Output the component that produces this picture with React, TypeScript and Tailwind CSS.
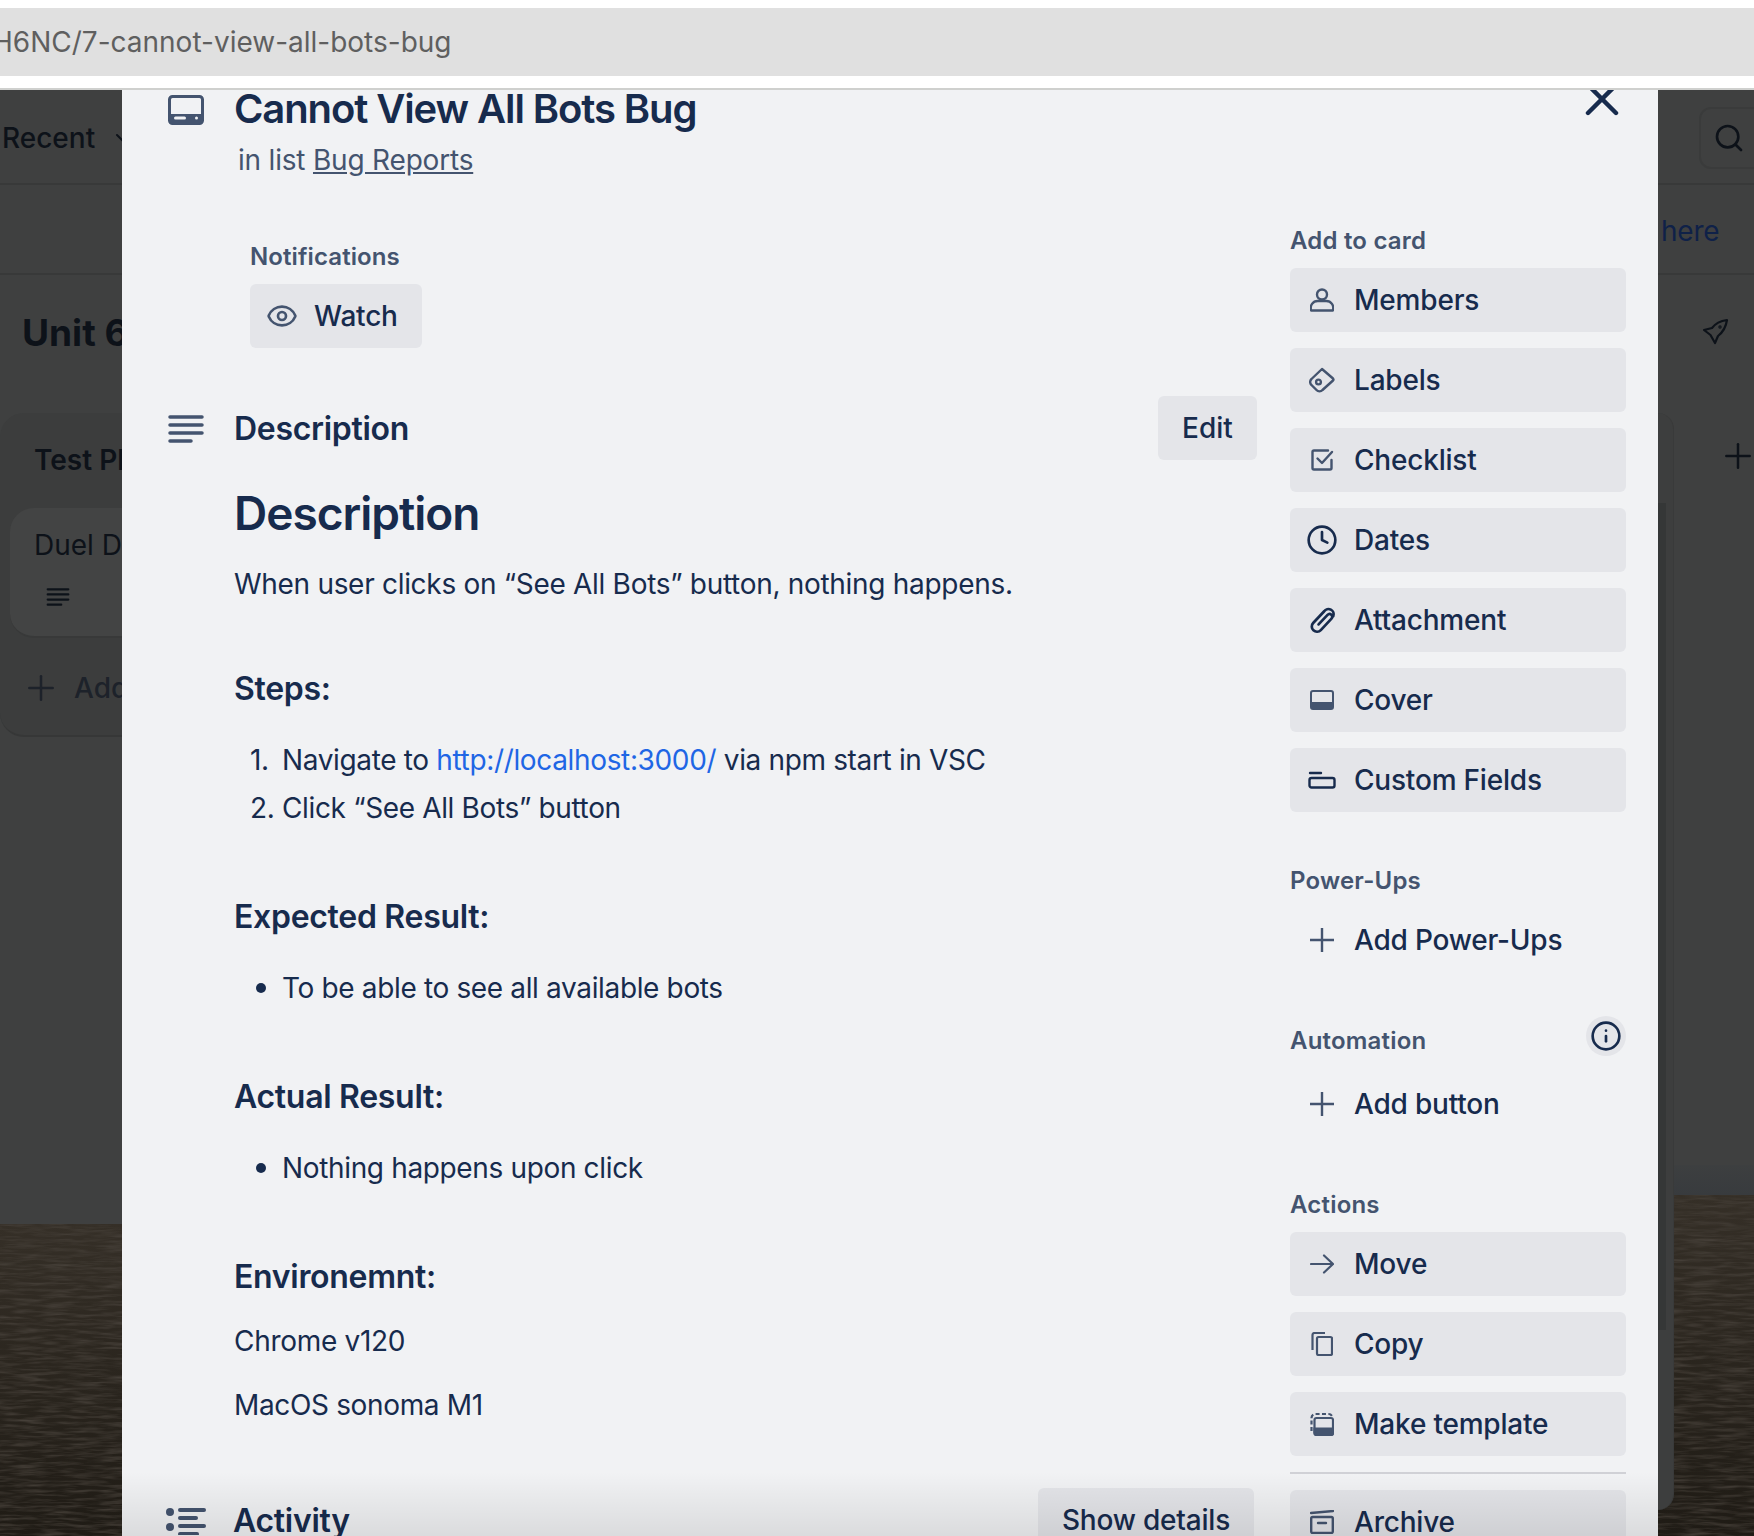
import { ChevronDown, Clock, Eye, Info, Plus, Search, X } from "lucide-react";
import type { ReactNode } from "react";

const font = "font-['Inter',sans-serif]";

function CardIcon({ className }: { className: string }) {
  return (
    <svg viewBox="0 0 36 30" className={className} fill="none">
      <rect x="1.5" y="1.5" width="33" height="27" rx="3" stroke="currentColor" strokeWidth="3" />
      <path d="M2 19h32v7a3 3 0 0 1-3 3H5a3 3 0 0 1-3-3z" fill="currentColor" />
      <rect x="6" y="21.5" width="12" height="3" rx="1.5" fill="#f1f2f4" />
      <rect x="27" y="21.5" width="3" height="3" rx="1.5" fill="#f1f2f4" />
    </svg>
  );
}

function LinesIcon({ className }: { className: string }) {
  return (
    <svg viewBox="0 0 36 28" className={className} fill="none" stroke="currentColor" strokeWidth="3.5" strokeLinecap="round">
      <path d="M2 2h32M2 10h32M2 18h32M2 26h21" />
    </svg>
  );
}

function ActivityIcon({ className }: { className: string }) {
  return (
    <svg viewBox="0 0 40 28" className={className} fill="currentColor">
      <circle cx="4" cy="5" r="4" />
      <circle cx="4" cy="20" r="4" />
      <rect x="12" y="1" width="28" height="4" rx="2" />
      <rect x="12" y="9" width="20" height="4" rx="2" />
      <rect x="12" y="17" width="28" height="4" rx="2" />
      <rect x="12" y="25" width="21" height="4" rx="2" />
    </svg>
  );
}

function MemberIcon() {
  return (
    <svg viewBox="0 0 24 24" className="w-6 h-6" fill="none" stroke="#44546f" strokeWidth="2.4">
      <circle cx="12" cy="6.500" r="5" />
      <path d="M8 13h8a7 7 0 0 1 6.800 9.500H1.200A7 7 0 0 1 8 13z" strokeLinejoin="round" />
    </svg>
  );
}

function LabelIcon() {
  return (
    <svg viewBox="0 0 26 26" className="w-[26px] h-[26px]" fill="none" stroke="#44546f" strokeWidth="2.4" strokeLinejoin="round">
      <path d="M13 2 24 11.500a1.500 1.500 0 0 1 0 2L13.500 23a4 4 0 0 1-6 0L2.500 18a4 4 0 0 1 0-6z" />
      <circle cx="9.500" cy="15" r="2.400" />
    </svg>
  );
}

function CheckIcon() {
  return (
    <svg viewBox="0 0 24 24" className="w-6 h-6" fill="none" stroke="#44546f" strokeWidth="2.4" strokeLinecap="round" strokeLinejoin="round">
      <path d="M18 2.500H4a1.500 1.500 0 0 0-1.500 1.500v16A1.500 1.500 0 0 0 4 21.500h16a1.500 1.500 0 0 0 1.500-1.500v-8" />
      <path d="M7.500 10.500l4.500 4.500L22 4" />
    </svg>
  );
}

function ClipIcon() {
  return (
    <svg viewBox="0 0 24 24" className="w-[27px] h-[27px] shrink-0" fill="none" stroke="#172b4d" strokeWidth="2.400" strokeLinecap="round">
      <path d="M8.500 15.500 16.500 7A2.400 2.400 0 0 1 20 10.300L10.500 20.500A4.600 4.600 0 0 1 3.700 14.200L13.500 3.800A4.600 4.600 0 0 1 21.600 8" />
    </svg>
  );
}

function CoverIcon() {
  return (
    <svg viewBox="0 0 24 20" className="w-6 h-5" fill="none">
      <rect x="1" y="1" width="22" height="18" rx="2" stroke="#44546f" strokeWidth="2" />
      <path d="M1 12h22v5a2 2 0 0 1-2 2H3a2 2 0 0 1-2-2z" fill="#44546f" />
    </svg>
  );
}

function FieldsIcon() {
  return (
    <svg viewBox="0 0 28 18" className="w-7 h-[18px]" fill="none" stroke="#172b4d" strokeWidth="2.4" strokeLinecap="round">
      <path d="M2 2h11" />
      <rect x="1.500" y="7" width="25" height="9.500" rx="2" />
    </svg>
  );
}

function PlusIcon() {
  return (
    <svg viewBox="0 0 24 24" className="w-6 h-6" fill="none" stroke="#44546f" strokeWidth="2.400">
      <path d="M0 12h24M12 0v24" />
    </svg>
  );
}

function MoveIcon() {
  return (
    <svg viewBox="0 0 24 24" className="w-6 h-6" fill="none" stroke="#44546f" strokeWidth="2.200" strokeLinecap="round" strokeLinejoin="round">
      <path d="M1 12h22M14 3.500 23 12l-9 8.500" />
    </svg>
  );
}

function CopyIcon() {
  return (
    <svg viewBox="0 0 22 24" className="w-[22px] h-6" fill="none" stroke="#44546f" strokeWidth="2.200" strokeLinejoin="round">
      <rect x="6" y="5" width="15" height="18" rx="1.500" />
      <path d="M1.500 18V3a2 2 0 0 1 2-2H14" />
    </svg>
  );
}

function TemplateIcon() {
  return (
    <svg viewBox="0 0 24 24" className="w-6 h-6" fill="none" stroke="#44546f" strokeWidth="2.200">
      <path d="M1.500 19V6a4 4 0 0 1 4-4h13a4 4 0 0 1 4 4" strokeDasharray="4 2.400" />
      <rect x="4.500" y="6" width="18.500" height="17" rx="2" />
      <path d="M4.500 16.500h18.500v4.500a2 2 0 0 1-2 2H6.500a2 2 0 0 1-2-2z" fill="#44546f" />
    </svg>
  );
}

function ArchiveIcon() {
  return (
    <svg viewBox="0 0 24 24" className="w-6 h-6" fill="none" stroke="#44546f" strokeWidth="2.400" strokeLinecap="round">
      <path d="M1 3 23 1" />
      <rect x="1.200" y="7" width="21.600" height="16" rx="1.500" />
      <path d="M8 13h8" />
    </svg>
  );
}

// the blurred field photo behind the board
function Field() {
  return (
    <svg viewBox="0 0 240 360" preserveAspectRatio="xMidYMin slice" className="w-full h-full block">
      <defs>
        <linearGradient id="ground" x1="0" y1="0" x2="0" y2="1">
          <stop offset="0" stopColor="#352f27" />
          <stop offset="1" stopColor="#1f1b15" />
        </linearGradient>
        <filter id="soil" x="0" y="0" width="100%" height="100%">
          <feTurbulence type="fractalNoise" baseFrequency="0.03 0.28" numOctaves="3" seed="7" />
          <feColorMatrix values="0 0 0 0 0.06  0 0 0 0 0.05  0 0 0 0 0.04  2 0 0 0 -0.8" />
        </filter>
      </defs>
      <rect width="240" height="360" fill="url(#ground)" />
      <rect width="240" height="360" filter="url(#soil)" />
    </svg>
  );
}

function SideLabel({ children, className = "" }: { children: ReactNode; className?: string }) {
  return <h3 className={`text-2xl leading-8 font-semibold tracking-[0.2px] text-[#44546f] ${className}`}>{children}</h3>;
}

function SideButton({ icon, label, plain }: { icon: ReactNode; label: string; plain?: boolean }) {
  return (
    <button className={`flex items-center gap-4 w-[336px] h-16 pl-4 rounded-md text-[28px] font-medium tracking-[-0.2px] text-[#172b4d] shrink-0 ${plain ? "" : "bg-[#e4e5e9]"}`}>
      <span className="flex items-center justify-center w-8 h-8 text-[#44546f]">{icon}</span>
      {label}
    </button>
  );
}

function Heading({ children, className }: { children: ReactNode; className: string }) {
  return <h2 className={`text-[32px] leading-10 font-semibold tracking-[-0.3px] text-[#172b4d] ${className}`}>{children}</h2>;
}

function BulletItem({ children, className = "" }: { children: ReactNode; className?: string }) {
  return (
    <p className={`flex items-center text-[28px] leading-12 tracking-[-0.35px] ${className}`}>
      <span className="w-2.5 h-2.5 rounded-full bg-[#172b4d] ml-[22px] mr-[16px]" />
      {children}
    </p>
  );
}

export default function App() {
  return (
    <div className={`w-[1754px] h-[1536px] overflow-hidden flex flex-col bg-white ${font}`}>
      <div className="mt-2 h-[68px] shrink-0 bg-[#e0e0e0] overflow-hidden flex items-center text-[28px] text-[#5f5f5f]">
        <span className="ml-[-8px] whitespace-nowrap">H6NC/7-cannot-view-all-bots-bug</span>
      </div>
      <div className="mt-3 h-0.5 shrink-0 bg-[#cfd0ce]" />

      <div className="flex flex-1 min-h-0">
        {/* board behind the modal, left side */}
        <div className="w-[122px] shrink-0 overflow-hidden flex flex-col bg-[#3f4040] text-[#0d1219]">
          <div className="h-[95px] shrink-0 flex items-center pl-0.5 pt-0.5 gap-4 border-b-2 border-[#383939] text-[28px] font-medium whitespace-nowrap">
            Recent <ChevronDown className="w-6 h-6 shrink-0" />
          </div>
          <div className="h-[90px] shrink-0 border-b-2 border-[#383939]" />
          <div className="h-[949px] shrink-0 pt-[34px] pl-[22px]">
            <div className="text-[37px] leading-12 font-bold whitespace-nowrap">Unit 6</div>
            <div className="mt-[56px] ml-[-22px] w-[300px] h-[324px] rounded-3xl bg-[#3c3d3d] border-b-2 border-[#363737] pl-[34px] pt-[31px]">
              <div className="text-[28px] leading-8 font-semibold whitespace-nowrap">Test Plan</div>
              <div className="mt-[32px] ml-[-24px] h-[130px] rounded-3xl bg-[#434444] border-b-2 border-[#383939] pl-6 pt-[19px]">
                <div className="text-[28px] leading-9 whitespace-nowrap">Duel Duo</div>
                <LinesIcon className="w-6 h-[18px] mt-[25px] ml-3" />
              </div>
              <div className="mt-[29px] ml-[-13px] flex items-center gap-[13px] text-[28px] font-medium text-[#1d222a] whitespace-nowrap">
                <Plus className="w-10 h-10 shrink-0" strokeWidth={1.5} /> Add a card
              </div>
            </div>
          </div>
          <div className="flex-1 min-h-0">
            <Field />
          </div>
        </div>

        {/* card modal */}
        <div className="w-[1536px] shrink-0 relative overflow-hidden bg-[#f1f2f4] text-[#172b4d]">
          <X className="absolute left-[1452px] top-[-19px] w-14 h-14" strokeWidth={1.9} />
          <div className="pl-[46px] pt-[3px] flex gap-[30px]">
            <CardIcon className="w-9 h-[30px] mt-[2px] text-[#44546f]" />
            <div>
              <h1 className="text-[40px] leading-[30px] font-semibold tracking-[-1.1px] pt-px whitespace-nowrap">Cannot View All Bots Bug</h1>
              <p className="mt-[18px] ml-1 text-[28px] leading-9 tracking-[-0.2px] text-[#44546f]">
                in list <span className="underline">Bug Reports</span>
              </p>
            </div>
          </div>

          <div className="flex mt-[47px]">
            <div className="w-[1168px] shrink-0 pl-[128px] pr-[33px]">
              <div className="mt-4 text-2xl leading-8 font-semibold tracking-[0.1px] text-[#44546f]">Notifications</div>
              <button className="mt-[11px] flex items-center h-16 w-[172px] pl-4 gap-4 rounded-md bg-[#e4e5e9] text-[28px] font-medium tracking-[-0.2px]">
                <Eye className="w-8 h-8 text-[#44546f]" strokeWidth={2} />
                Watch
              </button>

              <div className="mt-[49px] ml-[-82px] flex items-center h-16">
                <LinesIcon className="w-9 h-7 text-[#44546f]" />
                <Heading className="ml-[30px]">Description</Heading>
                <button className="ml-auto mt-[-2px] w-[99px] h-16 rounded-md bg-[#e4e5e9] text-[28px] font-medium">Edit</button>
              </div>

              <div className="ml-[-16px]">
                <h1 className="mt-[22px] text-[46px] leading-[60px] font-semibold tracking-[-1px]">Description</h1>
                <p className="mt-[17px] text-[28px] leading-12 tracking-[-0.3px]">When user clicks on “See All Bots” button, nothing happens.</p>
                <Heading className="mt-[61px]">Steps:</Heading>
                <ol className="mt-[27px] text-[28px] leading-12 tracking-[-0.35px]">
                  <li className="flex">
                    <span className="w-12 pl-4">1.</span>
                    <span>Navigate to <span className="text-[#1f66e5]">http://localhost:3000/</span> via npm start in VSC</span>
                  </li>
                  <li className="flex">
                    <span className="w-12 pl-4">2.</span>
                    <span>Click “See All Bots” button</span>
                  </li>
                </ol>
                <Heading className="mt-[65px]">Expected Result:</Heading>
                <BulletItem className="mt-[27px]">To be able to see all available bots</BulletItem>
                <Heading className="mt-[65px]">Actual Result:</Heading>
                <BulletItem className="mt-[27px]">Nothing happens upon click</BulletItem>
                <Heading className="mt-[65px]">Environemnt:</Heading>
                <p className="mt-[20px] text-[28px] leading-12 tracking-[-0.3px]">Chrome v120</p>
                <p className="mt-4 text-[28px] leading-12 tracking-[-0.35px]">MacOS sonoma M1</p>
              </div>

              <div className="mt-[60px] ml-[-82px] flex items-center h-16">
                <ActivityIcon className="w-10 h-7 text-[#44546f] ml-[-2px]" />
                <Heading className="ml-[27px]">Activity</Heading>
                <button className="ml-auto mt-[-2px] mr-[3px] w-[216px] h-16 rounded-md bg-[#e4e5e9] text-[28px] font-medium tracking-[-0.2px]">Show details</button>
              </div>
            </div>

            <div className="w-[336px] shrink-0 flex flex-col">
              <SideLabel>Add to card</SideLabel>
              <div className="mt-[11px] flex flex-col gap-4">
                <SideButton icon={<MemberIcon />} label="Members" />
                <SideButton icon={<LabelIcon />} label="Labels" />
                <SideButton icon={<CheckIcon />} label="Checklist" />
                <SideButton icon={<Clock className="w-8 h-8 text-[#172b4d]" strokeWidth={2} />} label="Dates" />
                <SideButton icon={<ClipIcon />} label="Attachment" />
                <SideButton icon={<CoverIcon />} label="Cover" />
                <SideButton icon={<FieldsIcon />} label="Custom Fields" />
              </div>
              <SideLabel className="mt-[53px]">Power-Ups</SideLabel>
              <div className="mt-[11px]">
                <SideButton plain icon={<PlusIcon />} label="Add Power-Ups" />
              </div>
              <div className="mt-[44px] flex items-start justify-between">
                <SideLabel className="mt-[9px]">Automation</SideLabel>
                <span className="w-10 h-10 rounded-full bg-[#e4e5e9] flex items-center justify-center">
                  <Info className="w-8 h-8 text-[#172b4d]" strokeWidth={2} />
                </span>
              </div>
              <div className="mt-[15px]">
                <SideButton plain icon={<PlusIcon />} label="Add button" />
              </div>
              <SideLabel className="mt-[53px]">Actions</SideLabel>
              <div className="mt-[11px] flex flex-col gap-4">
                <SideButton icon={<MoveIcon />} label="Move" />
                <SideButton icon={<CopyIcon />} label="Copy" />
                <SideButton icon={<TemplateIcon />} label="Make template" />
              </div>
              <div className="mt-4 h-0.5 bg-[#d0d1d6]" />
              <div className="mt-4">
                <SideButton icon={<ArchiveIcon />} label="Archive" />
              </div>
            </div>
          </div>

          {/* window bottom shade over the modal */}
          <div className="absolute inset-x-0 bottom-0 h-16 bg-gradient-to-b from-transparent to-[#00000018] pointer-events-none" />
        </div>

        {/* board behind the modal, right side */}
        <div className="flex-1 min-w-0 overflow-hidden flex flex-col bg-[#3f4040] text-[#0d1219] relative">
          <div className="h-[95px] shrink-0 flex items-center pl-[41px] pt-[3px] border-b-2 border-[#383939]">
            <span className="w-[120px] h-[62px] shrink-0 flex items-center pl-3 border-2 border-[#3a3b3b] rounded-xl">
              <Search className="w-8 h-8" strokeWidth={2} />
            </span>
          </div>
          <div className="h-[90px] shrink-0 flex items-center pl-[3px] pt-1 border-b-2 border-[#383939] text-[28px] tracking-[-0.2px] text-[#0f2148]">here</div>
          <div className="h-[890px] shrink-0 relative">
            <svg viewBox="0 0 28 28" className="absolute left-[44px] top-[43px] w-7 h-7" fill="none" stroke="#0d1219" strokeWidth="2.200" strokeLinejoin="round">
              <path d="M25 2C18 3 13 6 10 10L2 12l6.500 5L13 25l3-7c5-4 8-9 9-16z" />
              <circle cx="18" cy="9" r="0.600" />
            </svg>
            <Plus className="absolute left-[60px] top-[161px] w-10 h-10" strokeWidth={1.5} />
          </div>
          <div className="h-[30px] shrink-0 bg-gradient-to-b from-[#3d3f40] to-[#383b3e]" />
          <div className="flex-1 min-h-0">
            <Field />
          </div>
          {/* right edge of the list that runs under the modal */}
          <div className="absolute left-0 top-[323px] w-4 h-[1097px] rounded-br-3xl rounded-tr-3xl bg-[#3d3e3e] border-r border-[#393a3a]">
            <div className="mt-[90px] w-2 h-[827px] bg-[#353737]" />
          </div>
        </div>
      </div>
    </div>
  );
}
